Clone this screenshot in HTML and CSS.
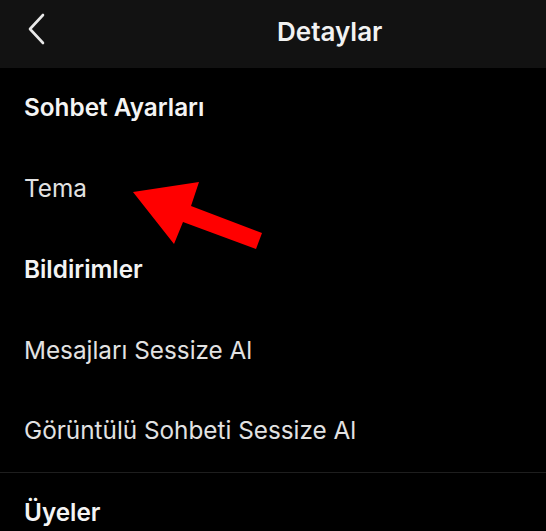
FILE: index.html
```html
<!DOCTYPE html>
<html lang="tr">
<head>
<meta charset="utf-8">
<title>Detaylar</title>
<link rel="stylesheet" href="styles.css">
</head>
<body>
<div class="screen">
  <header class="topbar">
    <svg class="back" width="20" height="32" viewBox="0 0 20 32"><path d="M16 2 L3 16 L16 30" fill="none" stroke="#e8e8e8" stroke-width="2.6" stroke-linecap="round" stroke-linejoin="round"/></svg>
    <div class="title">Detaylar</div>
  </header>
  <div class="list">
    <div class="row heading">Sohbet Ayarları</div>
    <div class="row item">Tema</div>
    <div class="row heading">Bildirimler</div>
    <div class="row item">Mesajları Sessize Al</div>
    <div class="row item last">Görüntülü Sohbeti Sessize Al</div>
    <div class="row heading">Üyeler</div>
  </div>
  <svg class="arrow" width="546" height="531" viewBox="0 0 546 531"><polygon points="133,192 199,182 191,206 262,233 256,249 183,222 174,244" fill="#ff0000"/></svg>
</div>
</body>
</html>
```
FILE: styles.css
```css
html, body {
  margin: 0;
  padding: 0;
  background: #000;
}
.screen {
  position: relative;
  width: 546px;
  height: 531px;
  overflow: hidden;
  background: #000;
  font-family: Inter, "Noto Sans", sans-serif;
}
.topbar {
  height: 68px;
  background: #121212;
  display: flex;
  align-items: center;
  box-sizing: border-box;
  padding-left: 27px;
}
.back {
  display: block;
  margin-top: -10px;
}
.title {
  margin-left: 230px;
  color: #f2f2f2;
  font-size: 26px;
  font-weight: 600;
  margin-top: -6px;
}
.list {
  display: flex;
  flex-direction: column;
}
.row {
  height: 81px;
  display: flex;
  align-items: center;
  padding-left: 24px;
  padding-bottom: 4px;
  box-sizing: border-box;
  font-size: 24.3px;
  color: #e6e6e6;
}
.heading {
  font-weight: 600;
  color: #f4f4f4;
}
.item {
  font-weight: 400;
  color: #e2e2e2;
}
.last {
  border-bottom: 1px solid #1e1e1e;
}
.arrow {
  position: absolute;
  left: 0;
  top: 0;
}
```
